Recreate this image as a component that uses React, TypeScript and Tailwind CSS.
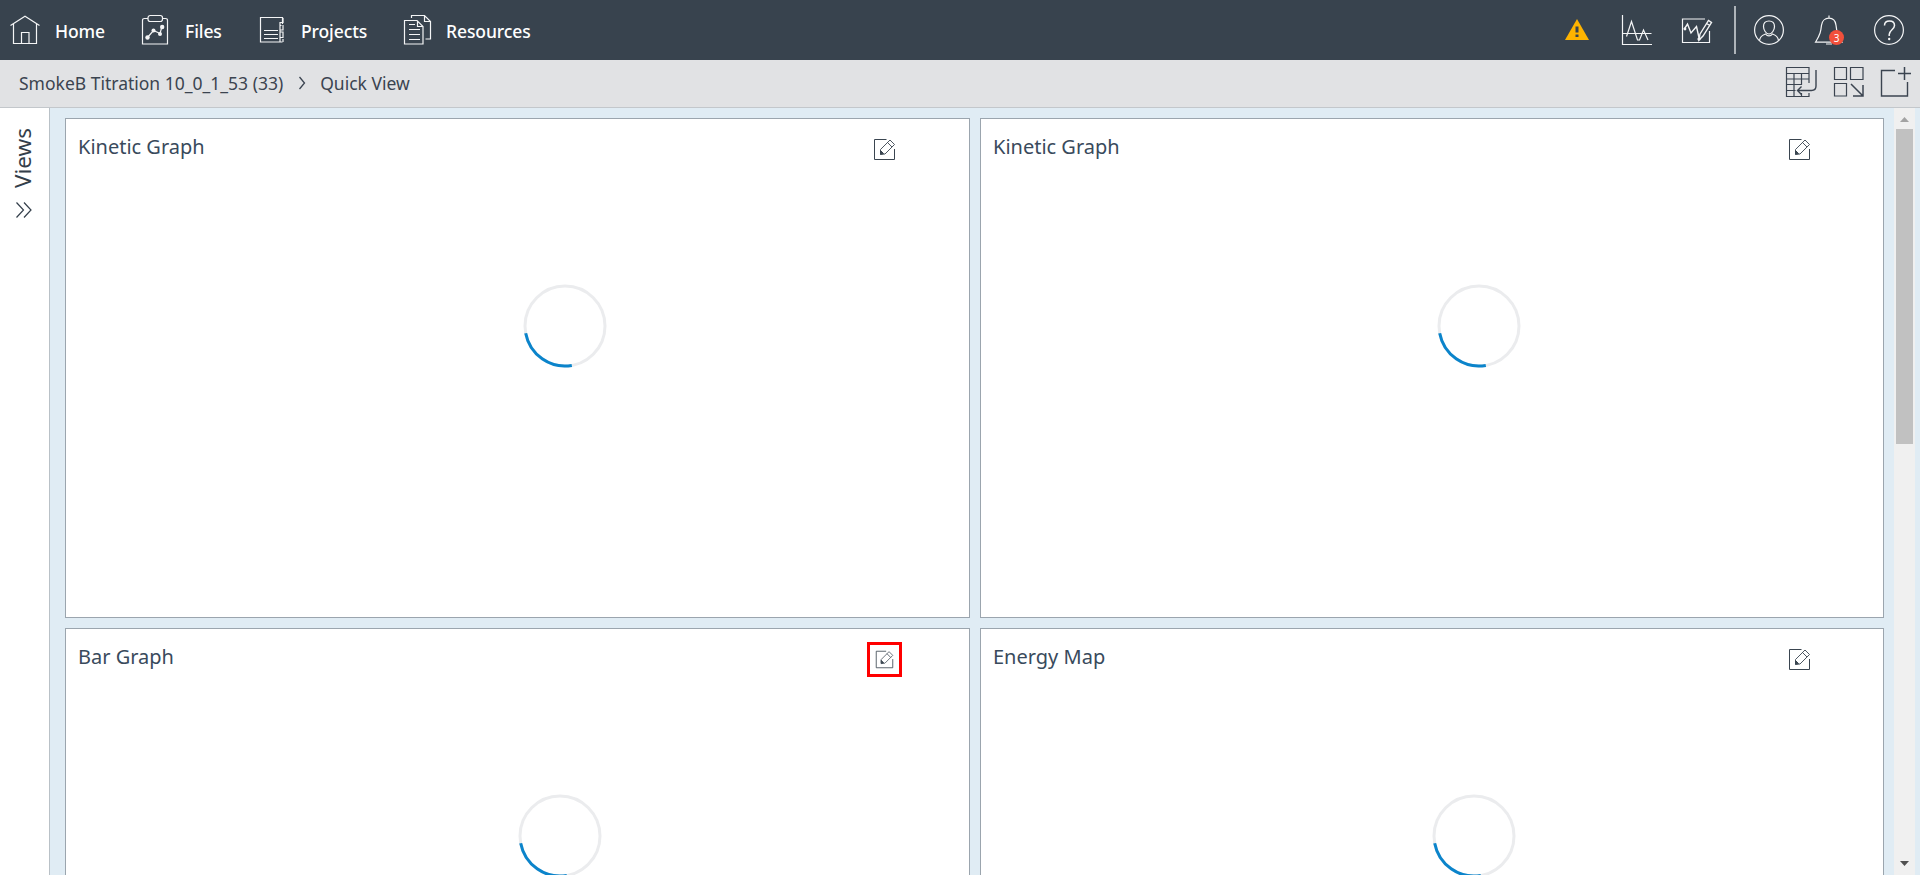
import React from 'react';

type SvgProps = { className?: string; children: React.ReactNode; w?: number; h?: number };

function Icon({ className = '', children, w = 32, h = 32 }: SvgProps) {
  return (
    <svg
      width={w}
      height={h}
      viewBox={`0 0 ${w} ${h}`}
      fill="none"
      stroke="currentColor"
      strokeWidth={1.2}
      className={`block shrink-0 ${className}`}
    >
      {children}
    </svg>
  );
}

const HomeIcon = () => (
  <Icon>
    <path d="M1.500 11.500 16 2.200l14.500 9.300M4.500 10v19.500h23V10M12.500 29.500v-11h7.500v11" />
  </Icon>
);

const FilesIcon = () => (
  <Icon>
    <path d="M9 4.500H5.500q-2 0-2 2v23.500h25V6.500q0-2-2-2H23" />
    <rect x="9" y="1.500" width="14.500" height="6" rx="2.200" />
    <path d="m8.500 23.500 6-7 6.500 3 2-7" />
    <g fill="currentColor" stroke="none">
      <circle cx="8.500" cy="23.500" r="2.200" />
      <circle cx="14.500" cy="16.500" r="2" />
      <circle cx="21" cy="20" r="2" />
      <circle cx="23.200" cy="13" r="2.200" />
    </g>
  </Icon>
);

const ProjectsIcon = () => (
  <Icon>
    <path d="M26.500 10V3.500h-22v24.500h22" />
    <path d="M8 16.500h14M8 20.500h14M8 24.500h14" />
    <path d="M27 4v4.500h-3v3h1.500M24 10v18M27 11v5h-2.500M24.500 18H27v5.500h-3M27 25v3" />
  </Icon>
);

const ResourcesIcon = () => (
  <Icon>
    <path d="M9.500 4V1.500h13l6 6v17.500h-5M22.500 1.500v6h6" />
    <path d="M2.500 6.500H15l6 6V30H2.500zM15.500 6.500v6H21" />
    <path d="M7 10.500h6M7 15.500h11M7 20.500h11M7 25.500h11" />
  </Icon>
);

const WaveIcon = () => (
  <Icon>
    <path d="M1.500 1v29.500H31M2 19.500h28.500" />
    <path d="m5.500 22.500 5-15 6 18.500h2l4-10 4.500 10" />
  </Icon>
);

const SketchIcon = () => (
  <Icon>
    <path d="M24 5H1.500v23.500h27V17" />
    <path d="m3 15.500 3.500-5.500 3.500 9 5.500-6.500 3 13.500" strokeWidth={1.400} />
    <path d="m19 20 8.500-13.500 3 2-8.500 13.500-4 4zM25.500 9.500l3.500 2" strokeWidth={1.400} />
    <circle cx="4" cy="15" r="1.400" fill="currentColor" stroke="none" />
    <circle cx="18" cy="25" r="1.600" fill="currentColor" stroke="none" />
  </Icon>
);

const UserIcon = () => (
  <Icon>
    <circle cx="16" cy="16" r="14.400" />
    <path d="M16 7c3.500 0 5.500 2.200 5.500 5.500S19 20 16 20s-5.500-4.200-5.500-7.500S12.500 7 16 7z" />
    <path d="M6.500 26.500c.5-4 3-5.500 6-6.500 2 2.600 5 2.600 7 0 3 1 5.500 2.500 6 6.500" />
  </Icon>
);

const BellIcon = () => (
  <Icon>
    <path d="M16 4.200c4 0 6.500 3 7 7 .7 6 1 9 6 17H2.500c5-8 5.300-11 6-17 .5-4 3.500-7 7.500-7zM16 4.200V1.500M13 30h6" />
  </Icon>
);

const HelpIcon = () => (
  <Icon>
    <circle cx="16" cy="16" r="14.400" />
    <path d="M11.500 11.500C11.500 8.500 13.500 7 16.500 7s5 1.500 5 4.500c0 4-5.300 4.500-5.300 9v1.500" strokeWidth={1.500} />
    <circle cx="16.200" cy="25" r="1.200" fill="currentColor" stroke="none" />
  </Icon>
);

const TableIcon = () => (
  <Icon>
    <path d="M24 17V1.500H1.500v29H24V27M1.500 7.500H24M1.500 13H24M1.500 18.500h15M1.500 24.500h9M9 7.500v23M16.500 7.500V19M16.500 27v3.500" />
    <path d="M31 4v16q0 4.500-4.500 4.500h-14M16.500 20.500l-4 4 4 4" strokeWidth={1.400} />
  </Icon>
);

const GridIcon = () => (
  <Icon>
    <path d="M1.500 1.500h12v12h-12zM17.500 1.500h12.500v12H17.500zM1.500 17.500h12v12.500h-12z" />
    <path d="m18 18 12 12M30 19v11H20" strokeWidth={1.500} />
  </Icon>
);

const AddPanelIcon = () => (
  <Icon>
    <path d="M15 4.500H1.500v25.500h26V16" strokeWidth={1.400} />
    <path d="M24.500 1v13M18 7.500h13" strokeWidth={1.500} />
  </Icon>
);

function EditIcon({ size = 23 }: { size?: number }) {
  return (
    <svg
      width={size}
      height={size}
      viewBox="0 0 23 23"
      fill="none"
      stroke="#3a4550"
      className="block shrink-0"
    >
      <path d="M13.500 1.500h-12v20h20V11" />
      <path d="m7.500 11.500 9.500-9.500 4.500 4.500-9.500 9.500-4.500.5zM14.500 4.500l4.500 4.500" strokeWidth={0.9} />
      <path d="m7.500 12.500 3 3-3 .7z" fill="#3a4550" />
    </svg>
  );
}

function Spinner() {
  return (
    <svg width="84" height="84" viewBox="0 0 84 84" fill="none" strokeWidth="3" className="block">
      <circle cx="42" cy="42" r="40" stroke="#ebecee" />
      <path d="M2.700 49.300A40 40 0 0 0 48.800 81.400" stroke="#0b84cb" />
    </svg>
  );
}

function NavItem({ icon, label, className }: { icon: React.ReactNode; label: string; className: string }) {
  return (
    <a className={`flex items-center ${className}`}>
      {icon}
      <span className="pt-[2px] text-[17.500px] leading-6 font-medium tracking-[-0.1px] text-white">{label}</span>
    </a>
  );
}

type PanelProps = { title: string; highlighted?: boolean; editClass?: string; spinnerClass: string };

function Panel({ title, highlighted = false, editClass = '', spinnerClass }: PanelProps) {
  return (
    <section className="h-[500px] border border-[#9ba5ae] bg-white">
      <div className="flex h-[62px] items-start justify-between pl-[12px]">
        <h2 className="pt-[14px] text-[20px] leading-7 text-[#394a5c]">{title}</h2>
        {highlighted ? (
          <button className="mt-[13px] mr-[67px] flex size-[35px] items-center justify-center border-3 border-[#ff0000]">
            <EditIcon size={19} />
          </button>
        ) : (
          <button className={`mt-[19px] ${editClass}`}>
            <EditIcon />
          </button>
        )}
      </div>
      <div className={`pt-[103px] ${spinnerClass}`}>
        <Spinner />
      </div>
    </section>
  );
}

export default function App() {
  return (
    <div className="flex h-[875px] w-[1920px] flex-col overflow-hidden bg-[#e0ecf4] font-['Noto_Sans',sans-serif]">
      <header className="flex h-[60px] shrink-0 items-center justify-between bg-[#38434e] text-[#f4f5f6]">
        <nav className="flex items-center pl-[9px]">
          <NavItem className="w-[130px] gap-[14px]" icon={<HomeIcon />} label="Home" />
          <NavItem className="w-[117px] gap-[14px]" icon={<FilesIcon />} label="Files" />
          <NavItem className="w-[146px] gap-[13px]" icon={<ProjectsIcon />} label="Projects" />
          <NavItem className="gap-[12px]" icon={<ResourcesIcon />} label="Resources" />
        </nav>
        <div className="flex items-center pr-[15px]">
          <svg width="24" height="22" viewBox="0 0 24 22" className="mr-[32px] mb-[1px] block">
            <path d="M12 0 24 21H0z" fill="#ffb400" />
            <path d="M10.500 7.500h3v6h-3zM10.500 15.500h3v2.500h-3z" fill="#38434e" />
          </svg>
          <div className="mr-[28px]"><WaveIcon /></div>
          <div className="mr-[21px]"><SketchIcon /></div>
          <div className="mr-[17px] h-12 w-[2px] bg-[#aeb4b9]" />
          <div className="mr-[28px]"><UserIcon /></div>
          <div className="relative mr-[28px]">
            <BellIcon />
            <span className="absolute top-[16px] left-[16px] flex size-[15px] items-center justify-center rounded-full bg-[#f2503b] text-[10px] leading-none text-white">
              3
            </span>
          </div>
          <HelpIcon />
        </div>
      </header>

      <div className="flex h-[48px] shrink-0 items-center justify-between border-b border-[#c3c7cb] bg-[#e1e2e4] text-[#3b4450]">
        <div className="flex items-center pb-[2px] pl-[19px] text-[17.500px] leading-6">
          <span>SmokeB Titration 10_0_1_53 (33)</span>
          <svg width="8" height="14" viewBox="0 0 8 14" fill="none" stroke="currentColor" strokeWidth="1.300" className="mr-[14px] ml-[15px] block">
            <path d="m1.500 1 5 6-5 6" />
          </svg>
          <span>Quick View</span>
        </div>
        <div className="flex items-center pr-[8px] pb-[3px]">
          <div className="mr-[16px]"><TableIcon /></div>
          <div className="mr-[15px]"><GridIcon /></div>
          <AddPanelIcon />
        </div>
      </div>

      <div className="flex min-h-0 flex-1">
        <aside className="flex w-[50px] shrink-0 flex-col items-center border-r border-[#b9c1c7] bg-white pt-[18px] pr-[1px] text-[#333e4a]">
          <span className="mr-[2px] h-[62px] rotate-180 text-[22.500px] leading-[30px] [writing-mode:vertical-rl]">Views</span>
          <svg width="18" height="18" viewBox="0 0 18 18" fill="none" stroke="currentColor" strokeWidth="1.200" className="mt-[13px] block">
            <path d="m1.500 1.500 7 7.500-7 7.500M9 1.500 16 9l-7 7.500" />
          </svg>
        </aside>
        <main className="grid flex-1 grid-cols-[905px_904px] content-start gap-[10px] overflow-hidden pt-[10px] pl-[15px]">
          <Panel title="Kinetic Graph" editClass="mr-[73px]" spinnerClass="pl-[457px]" />
          <Panel title="Kinetic Graph" editClass="mr-[72px]" spinnerClass="pl-[456px]" />
          <Panel title="Bar Graph" highlighted spinnerClass="pl-[452px]" />
          <Panel title="Energy Map" editClass="mr-[72px]" spinnerClass="pl-[451px]" />
        </main>
        <div className="mr-[5px] flex w-[21px] shrink-0 flex-col items-center justify-between bg-[#f0f0f0]">
          <div className="flex flex-col items-center">
            <svg width="9" height="5" viewBox="0 0 9 5" className="mt-[9px] mb-[7px] block">
              <path d="M4.500 0 9 5H0z" fill="#a3a3a3" />
            </svg>
            <div className="h-[315px] w-[17px] bg-[#c1c1c1]" />
          </div>
          <svg width="9" height="5" viewBox="0 0 9 5" className="mb-[9px] block">
            <path d="M4.500 5 9 0H0z" fill="#505050" />
          </svg>
        </div>
      </div>
    </div>
  );
}
